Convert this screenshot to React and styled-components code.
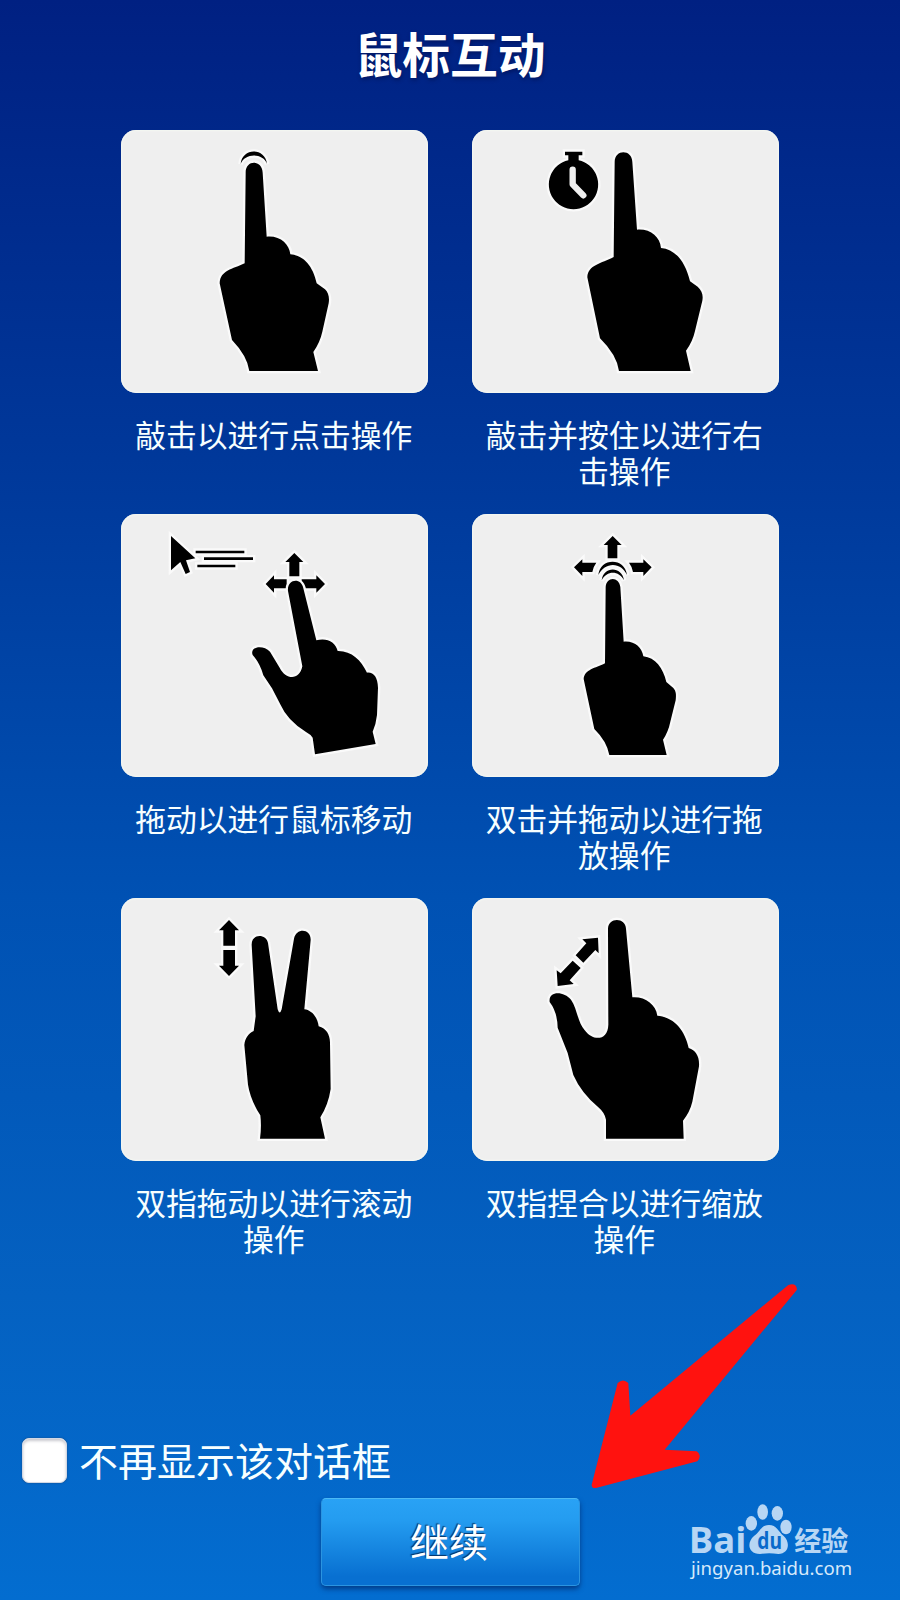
// App.jsx
import React, { useState } from "react";
import styled, { createGlobalStyle } from "styled-components";

// the gesture drawings use a canvas of 921x788 units, three units per pixel
const gestures = [
  {
    id: "tap",
    text: "敲击以进行点击操作",
    viewBox: "33 30 921 788",
    art: (
      <>
        <path d="M392 132 C396 82 466 82 471 132 C460 98 404 98 392 132 Z" />
        <path d="M407 158 C406 118 457 118 458 158 L470 350 C510 346 538 372 541 403 C583 407 609 440 620 490 L645 508 C655 518 659 532 656 550 L637 635 Q630 667 610 696 L624 753 H418 Q412 708 366 660 L329 490 C331 450 368 448 404 430 Z" />
      </>
    ),
  },
  {
    id: "hold",
    text: "敲击并按住以进行右击操作",
    viewBox: "36 30 921 788",
    art: (
      <>
        <path d="M315 95 H367 V106 H356 V121 A74 74 0 1 1 325 121 V106 H315 Z" />
        <path className="hand" d="M338 149 V193 L370 226" />
        <path d="M464 126 C464 87 516 87 517 126 L531 329 C571 326 600 350 603 384 C648 388 677 428 690 484 L713 500 C726 512 730 525 727 542 L705 633 Q698 665 678 692 L692 753 H477 Q470 704 420 655 L382 472 C384 434 424 431 461 411 Z" />
      </>
    ),
  },
  {
    id: "move",
    text: "拖动以进行鼠标移动",
    viewBox: "33 27 921 788",
    art: (
      <>
        <path d="M183 93 L256 160 L228 166 L240 201 L227 207 L211 171 L183 196 Z" />
        <path d="M257 137 H403 V145 H257 Z M282 157 H429 V165 H282 Z M262 179 H376 V187 H262 Z" />
        <path d="M553 144 L580 171 H568 V214 H538 V171 H526 Z" />
        <path d="M467 237 L492 211 V223 H530 V250 H492 V263 Z" />
        <path d="M645 237 L619 211 V223 H575 V250 H619 V263 Z" />
        <path d="M534 258 C530 222 574 216 580 250 L619 406 C650 397 677 411 683 438 C724 437 753 465 771 503 C791 501 803 517 804 548 L801 630 Q798 658 788 680 L797 717 L615 748 L608 698 Q603 689 588 681 Q532 646 512 600 L486 550 L460 511 Q450 475 428 450 C418 424 460 418 480 440 L509 488 C528 526 569 526 577 484 Z" />
      </>
    ),
  },
  {
    id: "drag",
    text: "双击并拖动以进行拖放操作",
    viewBox: "36 27 921 788",
    art: (
      <>
        <path d="M458 93 L485 120 H472 V160 H443 V120 H431 Z" />
        <path d="M342 187 L367 163 V173 H409 Q399 186 397 201 H367 V213 Z" />
        <path d="M575 187 L550 163 V173 H507 Q517 186 519 201 H550 V213 Z" />
        <path d="M415 210 C420 157 495 157 501 210 C484 170 434 170 415 210 Z" />
        <path d="M425 226 C430 183 486 183 492 226 C477 196 440 196 425 226 Z" />
        <path d="M437 246 C439 214 477 214 481 246 L491 410 C524 407 546 427 550 454 C586 458 609 489 619 531 L640 549 C648 558 649 568 647 586 L631 650 Q625 680 609 704 L620 750 H448 Q440 708 403 672 L371 522 C374 493 406 490 435 475 Z" />
      </>
    ),
  },
  {
    id: "scroll",
    text: "双指拖动以进行滚动操作",
    viewBox: "33 25 921 788",
    art: (
      <>
        <path d="M357 91 L387 122 H375 V168 H340 V122 H327 Z" />
        <path d="M357 259 L387 228 H375 V181 H340 V228 H327 Z" />
        <path d="M425 166 C424 130 469 132 474 160 L503 359 Q509 378 515 359 L552 147 C559 113 603 116 602 151 L583 359 C604 361 623 382 626 410 C649 417 659 434 660 458 L662 598 Q655 645 631 683 L645 747 H450 Q455 710 451 677 Q421 630 414 585 L403 466 C405 446 415 431 431 424 L437 380 Z" />
      </>
    ),
  },
  {
    id: "pinch",
    text: "双指捏合以进行缩放操作",
    viewBox: "36 25 921 788",
    art: (
      <>
        <path d="M414 144 L416 191 L406 181 L370 219 L347 197 L379 161 L367 149 Z" />
        <path d="M293 289 L290 242 L302 251 L338 213 L362 235 L329 272 L341 283 Z" />
        <path d="M444 117 C444 82 497 82 498 117 L517 323 C554 320 588 344 592 378 C641 382 675 421 686 475 C708 482 719 501 717 530 L697 636 Q690 666 669 693 L671 747 H438 V690 Q434 669 415 653 Q363 609 340 556 L323 490 L293 414 Q292 367 269 337 C264 303 311 303 333 330 C351 355 353 398 373 420 C397 454 443 456 445 405 Z" />
      </>
    ),
  },
];

export default function App() {
  const [hidden, setHidden] = useState(false);

  return (
    <Screen>
      <GlobalStyle />
      <Title>鼠标互动</Title>
      <Gestures>
        {gestures.map(({ id, text, viewBox, art }) => (
          <Gesture key={id}>
            <Card>
              <Drawing viewBox={viewBox}>{art}</Drawing>
            </Card>
            <Caption>{text}</Caption>
          </Gesture>
        ))}
      </Gestures>
      <Footer>
        <Option>
          <Checkbox
            type="checkbox"
            checked={hidden}
            onChange={(e) => setHidden(e.target.checked)}
          />
          <OptionText>不再显示该对话框</OptionText>
        </Option>
        <Continue type="button">继续</Continue>
      </Footer>
      <Pointer viewBox="0 0 330 630">
        <path d="M5 605 L83 300 Q99 285 115 300 L121 398 L595 6 Q619 -2 621 20 L224 500 L320 505 Q338 516 322 535 L18 615 Q5 617 5 605 Z" />
      </Pointer>
      <Watermark>
        <Logo viewBox="0 0 480 180">
          <text className="bai" x="-4" y="149" textLength="173" lengthAdjust="spacingAndGlyphs">
            Bai
          </text>
          <ellipse cx="184" cy="61" rx="17" ry="22" />
          <ellipse cx="218" cy="27" rx="16" ry="23" />
          <ellipse cx="262" cy="31" rx="17" ry="22" />
          <ellipse cx="288" cy="72" rx="17" ry="22" />
          <path d="M237 66 C260 66 264 85 281 99 C302 118 297 153 265 153 Q237 149 210 153 C173 153 170 118 192 99 C211 85 213 66 237 66 Z" />
          <text className="du" x="202" y="139" textLength="74" lengthAdjust="spacingAndGlyphs">
            du
          </text>
          <text className="cjk" x="313" y="143" textLength="162" lengthAdjust="spacingAndGlyphs">
            经验
          </text>
        </Logo>
        <Site>jingyan.baidu.com</Site>
      </Watermark>
    </Screen>
  );
}

const GlobalStyle = createGlobalStyle`
  * {
    box-sizing: border-box;
  }
  body {
    margin: 0;
  }
`;

const Screen = styled.main`
  position: relative;
  display: flex;
  flex-direction: column;
  align-items: center;
  width: 900px;
  height: 1600px;
  overflow: hidden;
  color: #f7ffff;
  font-family: "Noto Sans CJK SC", sans-serif;
  background: linear-gradient(#002082 0%, #003a9c 31%, #0051b3 56%, #0461c1 81%, #036dd0 100%);
`;

const Title = styled.h1`
  margin: 0;
  height: 130px;
  padding-top: 18px;
  font-size: 47.8px;
  line-height: 70px;
  font-weight: 700;
  color: #fff;
  text-shadow: 1px 2px 4px rgba(0, 0, 40, 0.4);
`;

const Gestures = styled.section`
  display: grid;
  grid-template-columns: repeat(2, 307px);
  grid-auto-rows: 384px;
  column-gap: 43.5px;
`;

const Gesture = styled.article`
  display: flex;
  flex-direction: column;
  gap: 23px;
`;

const Card = styled.div`
  height: 263px;
  border-radius: 15px;
  background: #efefef;
  overflow: hidden;
  box-shadow: inset 0 0 2px 1px #f5f8f2;
`;

const Drawing = styled.svg`
  display: block;
  width: 307px;
  height: 262.7px;

  path {
    fill: #000;
    stroke: #fafafa;
    stroke-width: 14;
    paint-order: stroke;
  }

  .hand {
    fill: none;
    stroke: #f0f0f0;
    stroke-width: 19;
    stroke-linecap: round;
    stroke-linejoin: round;
  }
`;

const Caption = styled.p`
  margin: 0;
  padding-right: 2px;
  font-size: 30.8px;
  line-height: 36px;
  text-align: center;
  word-break: break-all;
`;

const Footer = styled.footer`
  display: flex;
  flex-direction: column;
  align-items: center;
  width: 100%;
  margin-top: 156px;
`;

const Option = styled.label`
  display: flex;
  align-items: center;
  align-self: flex-start;
  gap: 12px;
  height: 45px;
  margin-left: 22px;
`;

const OptionText = styled.span`
  padding-bottom: 2px;
  font-size: 39px;
  line-height: 43px;
`;

const Checkbox = styled.input`
  appearance: none;
  width: 45px;
  height: 45px;
  margin: 0;
  border: 1px solid #d2d8e4;
  border-radius: 7px;
  background: #fff;
  box-shadow: inset 0 2px 3px #c9c9cf, 0 0 2px #174a83;
`;

const Continue = styled.button`
  width: 259px;
  height: 88px;
  margin-top: 15px;
  padding: 0 2px 4px 0;
  border: 1px solid #2b94e0;
  border-top-color: #4cb9f5;
  border-radius: 5px;
  background: linear-gradient(#29a2f5, #249cf0 25%, #0870d1 90%);
  box-shadow: 0 3px 5px rgba(0, 35, 100, 0.65);
  color: #fff;
  font-family: inherit;
  font-size: 39px;
  line-height: 58px;
  text-shadow: -1px -1px 1px rgba(0, 30, 70, 0.8);
`;

const Pointer = styled.svg`
  position: absolute;
  left: 590px;
  top: 1283px;
  width: 110px;
  height: 210px;
  overflow: visible;
  fill: #ff120f;
`;

const Watermark = styled.div`
  position: absolute;
  left: 690px;
  top: 1503px;
  width: 162px;
`;

const Logo = styled.svg`
  display: block;
  width: 160px;
  height: 60px;
  overflow: visible;
  fill: #b7d6f4;

  .bai {
    font: 700 106px "Open Sans", sans-serif;
  }

  .du {
    font: 700 70px "Open Sans", sans-serif;
    fill: #0869ca;
  }

  .cjk {
    font: 700 83px "Noto Sans CJK SC", sans-serif;
  }
`;

const Site = styled.div`
  margin: -8px 0 0 1px;
  font: 18.6px/26px "Noto Sans", sans-serif;
  color: #d6e9fb;
  white-space: nowrap;
`;
